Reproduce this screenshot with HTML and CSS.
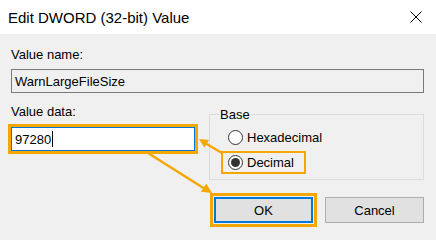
FILE: index.html
```html
<!DOCTYPE html>
<html lang="en">
<head>
    <meta charset="UTF-8">
    <meta name="viewport" content="width=device-width, initial-scale=1.0">
    <title>Edit DWORD (32-bit) Value</title>
    <link rel="stylesheet" href="styles.css">
</head>
<body>
    <div class="dialog">
        <div class="titlebar">
            <span class="title">Edit DWORD (32-bit) Value</span>
            <svg class="close" width="12" height="12" viewBox="0 0 12 12">
                <path d="M0.5 0.5 L11.5 11.5 M11.5 0.5 L0.5 11.5" stroke="#000" stroke-width="1" fill="none"/>
            </svg>
        </div>
        <div class="content">
            <div class="label">Value name:</div>
            <div class="field readonly">WarnLargeFileSize</div>

            <div class="row">
                <div class="col-left">
                    <div class="label">Value data:</div>
                    <div class="field focused marked">97280<span class="caret"></span></div>
                </div>
                <fieldset class="base">
                    <legend>Base</legend>
                    <label class="radio">
                        <span class="dot"></span>Hexadecimal
                    </label>
                    <label class="radio checked marked">
                        <span class="dot"></span>Decimal
                    </label>
                </fieldset>
            </div>

            <div class="buttons">
                <button class="btn default marked">OK</button>
                <button class="btn">Cancel</button>
            </div>
        </div>

        <!-- callout arrows drawn over the dialog -->
        <svg class="arrows" width="436" height="240" viewBox="0 0 436 240">
            <line x1="222" y1="153" x2="205" y2="143" stroke="#f5a700" stroke-width="2.5"/>
            <polygon points="199,139 209,139.9 204.4,147.5" fill="#f5a700"/>
            <line x1="148" y1="153" x2="205" y2="189" stroke="#f5a700" stroke-width="2.5"/>
            <polygon points="212,193 200.9,191.8 206.3,183.4" fill="#f5a700"/>
        </svg>
    </div>
</body>
</html>
```

FILE: styles.css
```css
body {
    margin: 0;
    font-family: "Liberation Sans", Arial, sans-serif;
    font-size: 13px;
    color: #000;
    background-color: #f0f0f0;
}
.dialog {
    position: relative;
    width: 436px;
    height: 240px;
    overflow: hidden;
    background-color: #f0f0f0;
}
.titlebar {
    height: 34px;
    background-color: #fff;
    display: flex;
    align-items: center;
    justify-content: space-between;
    padding: 0 14px 0 8px;
}
.title {
    font-size: 15px;
    margin-top: 1px;
}
.content {
    padding: 13px 12px 0 11px;
}
.label {
    line-height: 15px;
    height: 15px;
}
.field {
    box-sizing: border-box;
    height: 24px;
    margin-top: 7px;
    border: 1px solid #7a7a7a;
    padding-left: 3px;
    display: flex;
    align-items: center;
    line-height: 15px;
}
.field.readonly {
    background-color: #f0f0f0;
}
.field.focused {
    background-color: #fff;
    border-color: #0078d7;
    margin-top: 8px;
}
.caret {
    display: inline-block;
    width: 1px;
    height: 16px;
    background-color: #000;
    margin-left: 1px;
}
.marked {
    outline: 3px solid #f5a700;
}
.row {
    display: flex;
    margin-top: 11px;
    gap: 14px;
}
.col-left {
    width: 184px;
}
.base {
    flex: 1;
    margin: 3px 0 0 0;
    border: 1px solid #dcdcdc;
    padding: 5px 10px 6px 12px;
    display: flex;
    flex-direction: column;
    align-items: flex-start;
    gap: 4px;
    min-width: 0;
}
.base legend {
    padding: 0 1px;
    margin-left: -3px;
    line-height: 15px;
}
.radio {
    height: 21px;
    display: inline-flex;
    align-items: center;
    padding: 0 11px 0 6px;
    gap: 4px;
    margin-left: 0;
}
.dot {
    box-sizing: border-box;
    width: 15px;
    height: 15px;
    border: 1px solid #333;
    border-radius: 50%;
    background-color: #fff;
    display: flex;
    align-items: center;
    justify-content: center;
}
.radio.checked .dot::after {
    content: "";
    width: 9px;
    height: 9px;
    border-radius: 50%;
    background-color: #333;
}
.radio.marked {
    outline-offset: -1px;
    outline-width: 2.5px;
}
.buttons {
    display: flex;
    justify-content: flex-end;
    gap: 12px;
    margin-top: 17px;
}
.btn {
    box-sizing: border-box;
    width: 99px;
    height: 26px;
    font-family: inherit;
    font-size: 13px;
    background-color: #e1e1e1;
    border: 1px solid #adadad;
    color: #000;
    padding: 0;
}
.btn.default {
    border: 2px solid #0078d7;
}
.btn.marked {
    outline-offset: 1px;
}
.arrows {
    position: absolute;
    left: 0;
    top: 0;
    pointer-events: none;
}
```
